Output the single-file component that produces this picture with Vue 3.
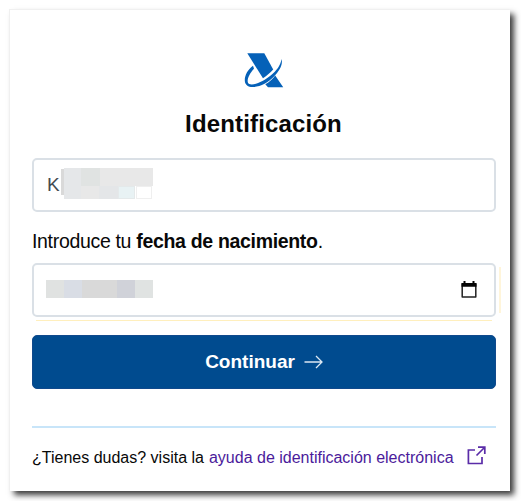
<template>
  <main class="card">
    <svg class="logo" viewBox="0 0 40 36" width="40" height="36">
      <path d="M3.300 .3H20.300L29.200 16.500C26.500 19.500 22.800 22.800 19 25.300Z" fill="#0561b8" />
      <path d="M31.200 22.500L39.200 34.300H24L21.300 31.200C25.500 29 28.800 26 31.200 22.500Z" fill="#0561b8" />
      <path
        d="M9 12.800C3.500 17 .6 22.500 .8 27.800C1 32.500 5 34.500 10 34C17 33.300 24.500 29.300 30 23.500C35.200 18 39.200 12 37.500 5.900C36.500 12.500 32.500 17.500 27 22.300C20 28.300 10 32.800 5.200 31C1.800 29.600 4.300 21.500 10 15.700Z"
        fill="#0561b8"
      />
    </svg>
    <h1>Identificación</h1>

    <form @submit.prevent>
      <div class="field">
        <span class="typed">K</span>
        <svg class="mask" width="92" height="32" shape-rendering="crispEdges">
          <rect y="1" width="4" height="26" fill="#d9d9d9" />
          <rect x="3" width="89" height="18" fill="#e8e8e8" />
          <rect x="3" width="17" height="31" fill="#e5e7e9" />
          <rect x="20" width="19" height="18" fill="#e0e3e2" />
          <rect x="20" y="18" width="37" height="13" fill="#e8e8e8" />
          <rect x="38" y="18" width="19" height="13" fill="#e4e6e8" />
          <rect x="57.500" y="18.500" width="16" height="12" fill="#e8f2f4" stroke="#e4e9ea" />
          <rect x="75.500" y="18.500" width="15" height="12" fill="#fff" stroke="#efefef" />
        </svg>
      </div>

      <p class="prompt">Introduce tu <strong>fecha de nacimiento</strong>.</p>

      <div class="field date">
        <div class="blocks">
          <i v-for="(color, i) in dateBlocks" :key="i" :style="{ background: color }"></i>
        </div>
        <svg class="calendar" width="16" height="18" viewBox="0 0 16 18">
          <path d="M1.200 3H14.800V16H1.200Z" fill="#fff" stroke="#222" stroke-width="1.500" stroke-linejoin="round" />
          <path d="M.5 2H15.500V5.800H.5ZM2.500 0H4.500V3H2.500ZM11.500 0H13.500V3H11.500Z" fill="#050505" />
        </svg>
      </div>

      <button type="submit">
        <span>Continuar</span>
        <svg width="19" height="14" viewBox="0 0 19 14">
          <path d="M.5 7H18M12 1L18 7L12 13" fill="none" stroke="#dce8f3" stroke-width="1.300" />
        </svg>
      </button>
    </form>

    <footer>
      <span class="question">¿Tienes dudas? visita la</span>
      <a href="#">ayuda de identificación electrónica</a>
      <svg width="19" height="19" viewBox="0 0 19 19">
        <path
          d="M8 4H1.400V17.500H15V11M9.500 9.500L17.500 1.500M11 1.200H17.800V8"
          fill="none"
          stroke="#5a2ca8"
          stroke-width="1.700"
        />
      </svg>
    </footer>
  </main>
</template>

<script setup>
const dateBlocks = ["#e0e2e1", "#d9dde5", "#d9d9d9", "#d9d9d9", "#d0d2d9", "#e0e3e2"];
</script>

<style>
body {
  margin: 0;
  background: #fff;
}
</style>

<style scoped>
.card {
  box-sizing: border-box;
  width: 500px;
  height: 481px;
  margin: 10px;
  padding: 43px 14px 0 22px;
  background: #fff;
  box-shadow: -1px -1px 0 #f0f0f0, 4px 4px 6px rgba(0, 0, 0, 0.78);
  font-family: "Liberation Sans", Arial, sans-serif;
  color: #080808;
  display: flex;
  flex-direction: column;
}

.logo {
  display: block;
  margin-left: 212px;
}

h1 {
  margin: 21px 0 0;
  width: 463px;
  font-size: 24px;
  line-height: 28px;
  letter-spacing: 0.15px;
  text-align: center;
}

form {
  margin-top: 20px;
}

.field {
  box-sizing: border-box;
  height: 54px;
  border: 2px solid #dae0e6;
  border-radius: 5px;
  padding: 0 17px 0 13px;
  display: flex;
  align-items: center;
}

.typed {
  width: 14px;
  font-size: 19px;
  color: #444b52;
}

.mask {
  align-self: flex-start;
  margin-top: 8px;
}

.prompt {
  margin: 18px 0 11px;
  font-size: 19.5px;
  line-height: 22px;
  letter-spacing: -0.32px;
  white-space: nowrap;
}

.date {
  position: relative;
  justify-content: space-between;
}

.date::before {
  content: "";
  position: absolute;
  left: 2px;
  right: 2px;
  bottom: -6px;
  height: 1px;
  background: #ffefbd;
}

.date::after {
  content: "";
  position: absolute;
  right: -7px;
  top: 2px;
  bottom: 2px;
  width: 2px;
  background: #fff5da;
}

.blocks {
  display: flex;
  width: 107px;
  height: 18px;
  margin: -2px 0 0 -1px;
}

.blocks i {
  flex: 1;
}

button {
  width: 100%;
  height: 54px;
  margin: 18px 0 0;
  padding: 0;
  border: 1px solid #10498c;
  border-radius: 5px;
  background: #004b8f;
  color: #fff;
  font: bold 19px "Liberation Sans", Arial, sans-serif;
  display: flex;
  align-items: center;
  justify-content: center;
  gap: 9px;
}

footer {
  margin-top: 37px;
  padding-top: 19px;
  border-top: 2px solid #c8e5f9;
  font-size: 16px;
  line-height: 22px;
  display: flex;
  align-items: center;
  white-space: nowrap;
}

footer a {
  margin-left: 5px;
  color: #4b1b9b;
  text-decoration: none;
}

footer svg {
  margin: -5px 0 0 13px;
}
</style>
